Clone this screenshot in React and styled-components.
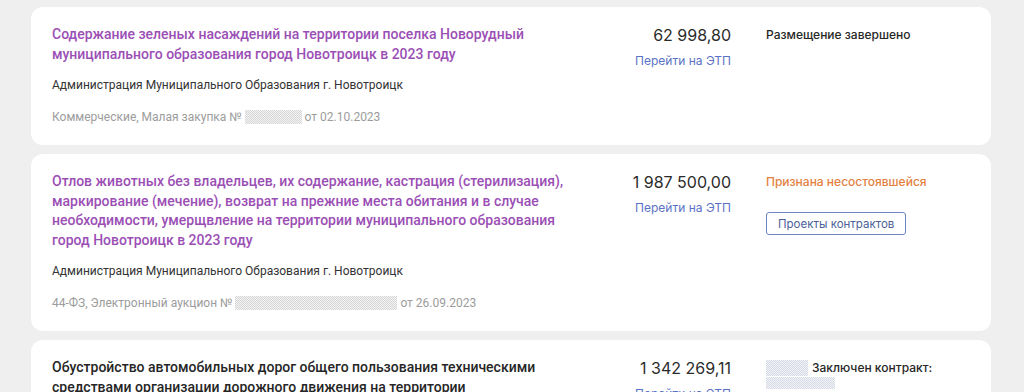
import React from 'react';
import styled, { createGlobalStyle } from 'styled-components';

const GlobalStyle = createGlobalStyle`
  body {
    margin: 0;
    background-color: #efefef;
    font-family: Inter, "Noto Sans", sans-serif;
    color: #2b2b2b;
  }
`

const List = styled.div`
  display: flex;
  flex-direction: column;
  gap: 9px;
  width: 960px;
  padding: 7px 0 0 31px;
`

const Card = styled.div`
  display: grid;
  grid-template-columns: 520px 1fr 204px;
  column-gap: 35px;
  background-color: #ffffff;
  border-radius: 12px;
  padding: 18px 21px 20px 21px;
`

const Main = styled.div`
  display: flex;
  flex-direction: column;
`

const Title = styled.a`
  font-family: Roboto, Inter, sans-serif;
  font-size: 14px;
  font-weight: 500;
  line-height: 19.5px;
  color: ${p => (p.$visited ? '#9b4fb5' : '#262626')};
  text-decoration: none;
`

const Customer = styled.div`
  margin-top: 13px;
  font-family: Roboto, Inter, sans-serif;
  font-size: 12px;
  line-height: 16px;
  color: #333333;
`

const Meta = styled.div`
  margin-top: 16px;
  font-family: Roboto, Inter, sans-serif;
  font-size: 12px;
  line-height: 16px;
  color: #9c9c9c;
`

const Masked = styled.span`
  display: inline-block;
  vertical-align: -3px;
  width: ${p => p.$w}px;
  height: ${p => p.$h || 14}px;
  background: repeating-conic-gradient(${p => p.$tint || '#d6d6d6'} 0 25%, #f4f4f4 0 50%) 0 0 / 2px 2px;
`

const PriceCol = styled.div`
  display: flex;
  flex-direction: column;
  align-items: flex-end;
`

const Price = styled.div`
  font-size: 16px;
  line-height: 20px;
  color: #2b2b2b;
  white-space: nowrap;
`

const EtpLink = styled.a`
  margin-top: 8px;
  font-size: 12px;
  line-height: 16px;
  color: #5a72c6;
  text-decoration: none;
`

const StatusCol = styled.div`
  display: flex;
  flex-direction: column;
  align-items: flex-start;
  padding-top: 1px;
`

const Status = styled.div`
  font-size: 12px;
  font-weight: 500;
  line-height: 18px;
  color: ${p => p.$color || '#262626'};
`

const ContractRow = styled.div`
  display: flex;
  align-items: center;
  gap: 4px;
`

const OutlineButton = styled.button`
  margin-top: 21px;
  height: 23px;
  padding: 0 11px;
  border: 1px solid #6d84c2;
  border-radius: 3px;
  background: #ffffff;
  font-family: inherit;
  font-size: 11.5px;
  color: #4c5f98;
`

export default function App() {
  return (
    <>
      <GlobalStyle />
      <List>
        <Card>
          <Main>
            <Title $visited>
              Содержание зеленых насаждений на территории поселка Новорудный муниципального образования город Новотроицк в 2023 году
            </Title>
            <Customer>Администрация Муниципального Образования г. Новотроицк</Customer>
            <Meta>
              Коммерческие, Малая закупка № <Masked $w={57} /> от 02.10.2023
            </Meta>
          </Main>
          <PriceCol>
            <Price>62 998,80</Price>
            <EtpLink>Перейти на ЭТП</EtpLink>
          </PriceCol>
          <StatusCol>
            <Status>Размещение завершено</Status>
          </StatusCol>
        </Card>

        <Card>
          <Main>
            <Title $visited>
              Отлов животных без владельцев, их содержание, кастрация (стерилизация), маркирование (мечение), возврат на прежние места обитания и в случае необходимости, умерщвление на территории муниципального образования город Новотроицк в 2023 году
            </Title>
            <Customer>Администрация Муниципального Образования г. Новотроицк</Customer>
            <Meta>
              44-ФЗ, Электронный аукцион № <Masked $w={162} /> от 26.09.2023
            </Meta>
          </Main>
          <PriceCol>
            <Price>1 987 500,00</Price>
            <EtpLink>Перейти на ЭТП</EtpLink>
          </PriceCol>
          <StatusCol>
            <Status $color="#e3803f">Признана несостоявшейся</Status>
            <OutlineButton>Проекты контрактов</OutlineButton>
          </StatusCol>
        </Card>

        <Card>
          <Main>
            <Title>
              Обустройство автомобильных дорог общего пользования техническими средствами организации дорожного движения на территории муниципального образования город Новотроицк
            </Title>
            <Customer>Администрация Муниципального Образования г. Новотроицк</Customer>
          </Main>
          <PriceCol>
            <Price>1 342 269,11</Price>
            <EtpLink>Перейти на ЭТП</EtpLink>
          </PriceCol>
          <StatusCol>
            <ContractRow>
              <Masked $w={42} $h={16} $tint="#d3d9e6" />
              <Status>Заключен контракт:</Status>
            </ContractRow>
            <Masked $w={69} $h={12} $tint="#d3d9e6" />
          </StatusCol>
        </Card>
      </List>
    </>
  );
}
